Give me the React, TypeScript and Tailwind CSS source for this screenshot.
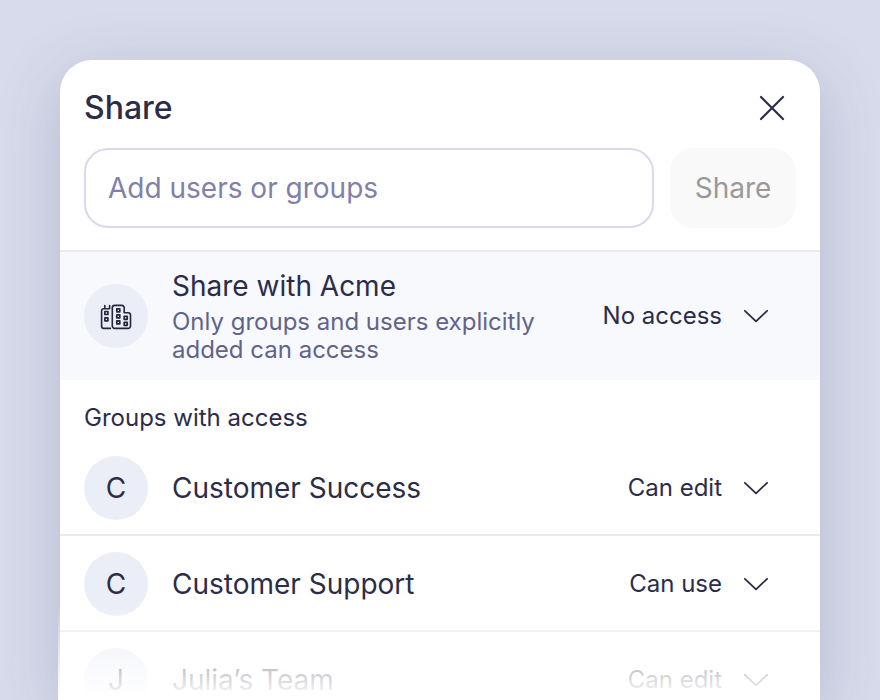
const GROUPS = [
  { name: "Customer Success", access: "Can edit" },
  { name: "Customer Support", access: "Can use" },
  { name: "Julia’s Team", access: "Can edit" },
];

const ACCESS_LEVELS = ["No access", "Can use", "Can edit"];

function AccessSelect({ label, value }: { label: string; value: string }) {
  return (
    <div className="relative mr-7 shrink-0">
      <select
        aria-label={label}
        defaultValue={value}
        className="field-sizing-content cursor-pointer appearance-none bg-transparent py-2 pr-[46px] text-2xl leading-7 text-[#2b2c49]"
      >
        {ACCESS_LEVELS.map((level) => (
          <option key={level}>{level}</option>
        ))}
      </select>
      <svg
        viewBox="0 0 24 12"
        className="pointer-events-none absolute top-4 right-0 h-3 w-6 overflow-visible"
        fill="none"
        stroke="#2b2c49"
        strokeWidth="1.8"
        strokeLinecap="round"
        strokeLinejoin="round"
      >
        <path d="M0.9 0.8L12 11.300 23.100 0.8" />
      </svg>
    </div>
  );
}

function BuildingsIcon() {
  return (
    <svg
      viewBox="0 0 32 28"
      className="h-7 w-8"
      fill="none"
      stroke="#25263c"
      strokeWidth="1.6"
      strokeLinecap="round"
      strokeLinejoin="round"
    >
      <path d="M10.4 26.400H3.800a2.200 2.200 0 0 1-2.200-2.200V8.700a2 2 0 0 1 2-2H9.500M4.800 6.700V3.600M9.600 6.700V3.600" />
      <path d="M14.700 3.400h7.100a2.400 2.400 0 0 1 2.400 2.400v4.900h3.900a2.400 2.400 0 0 1 2.400 2.400V24a2.400 2.400 0 0 1-2.400 2.400H14.700a2.400 2.400 0 0 1-2.400-2.400V5.800a2.400 2.400 0 0 1 2.400-2.400z" />
      <g strokeWidth="1.7">
        <rect x="4.900" y="9.500" width="3" height="3" />
        <rect x="4.900" y="15.800" width="3" height="3" />
        <rect x="16.800" y="6.800" width="3" height="3" />
        <rect x="16.800" y="12.800" width="3" height="3" />
        <rect x="16.800" y="18.800" width="3" height="3" />
        <rect x="24.200" y="14.300" width="3" height="3" />
        <rect x="24.200" y="20.300" width="3" height="3" />
      </g>
    </svg>
  );
}

export default function App() {
  return (
    <div className="flex h-screen flex-col overflow-hidden bg-[#d7dbeb] px-15 pt-15 font-['Inter',sans-serif] text-[#2b2c49]">
      <main className="relative min-h-0 flex-1 rounded-t-[32px] bg-white shadow-[0_16px_64px_rgba(70,75,115,0.22)]">
        <header className="border-b-2 border-[#e8ebf2] px-6 pt-6 pb-[22px]">
          <div className="flex items-center justify-between">
            <h1 className="text-[32px] leading-10 font-medium">Share</h1>
            <button aria-label="Close" className="flex size-12 cursor-pointer items-center justify-center">
              <svg
                viewBox="0 0 24 24"
                className="size-6 overflow-visible"
                fill="none"
                stroke="#2b2c49"
                strokeWidth="2.2"
                strokeLinecap="round"
              >
                <path d="M1 1l22 22M23 1L1 23" />
              </svg>
            </button>
          </div>
          <form className="mt-4 flex gap-4" onSubmit={(e) => e.preventDefault()}>
            <input
              type="text"
              aria-label="Add users or groups"
              placeholder="Add users or groups"
              className="h-20 min-w-0 flex-1 rounded-3xl border-2 border-[#dad9ec] px-[22px] text-[28px] outline-none placeholder:text-[#8080ab]"
            />
            <button type="submit" disabled className="h-20 w-[126px] rounded-3xl bg-[#f9f9f9] text-[28px] text-[#999999]">
              Share
            </button>
          </form>
        </header>

        <section className="flex items-center bg-[#f7f9fd] px-6 py-4">
          <div className="flex size-16 shrink-0 items-center justify-center rounded-full bg-[#ebeef7]">
            <BuildingsIcon />
          </div>
          <div className="mr-4 ml-6 flex-1">
            <h2 className="text-[28px] leading-9">Share with Acme</h2>
            <p className="mt-1 max-w-96 text-2xl leading-7 text-[#62638b]">
              Only groups and users explicitly added can access
            </p>
          </div>
          <AccessSelect label="Access for Acme" value="No access" />
        </section>

        <section>
          <h2 className="px-6 pt-6 pb-2 text-2xl leading-7">Groups with access</h2>
          <ul>
            {GROUPS.map((group) => (
              <li key={group.name} className="flex items-center border-b-2 border-[#e8ebf2] px-6 pt-4 pb-[14px]">
                <div className="flex size-16 shrink-0 items-center justify-center rounded-full bg-[#ebeef7] text-[28px]">
                  {group.name[0]}
                </div>
                <span className="ml-6 flex-1 text-[28px] leading-9">{group.name}</span>
                <AccessSelect label={`Access for ${group.name}`} value={group.access} />
              </li>
            ))}
          </ul>
        </section>

        {/* fades the list out towards the bottom edge */}
        <div className="pointer-events-none absolute right-0 bottom-0 -left-0.5 h-24 bg-linear-to-b from-white/0 via-white/75 via-70% to-white" />
      </main>
    </div>
  );
}
